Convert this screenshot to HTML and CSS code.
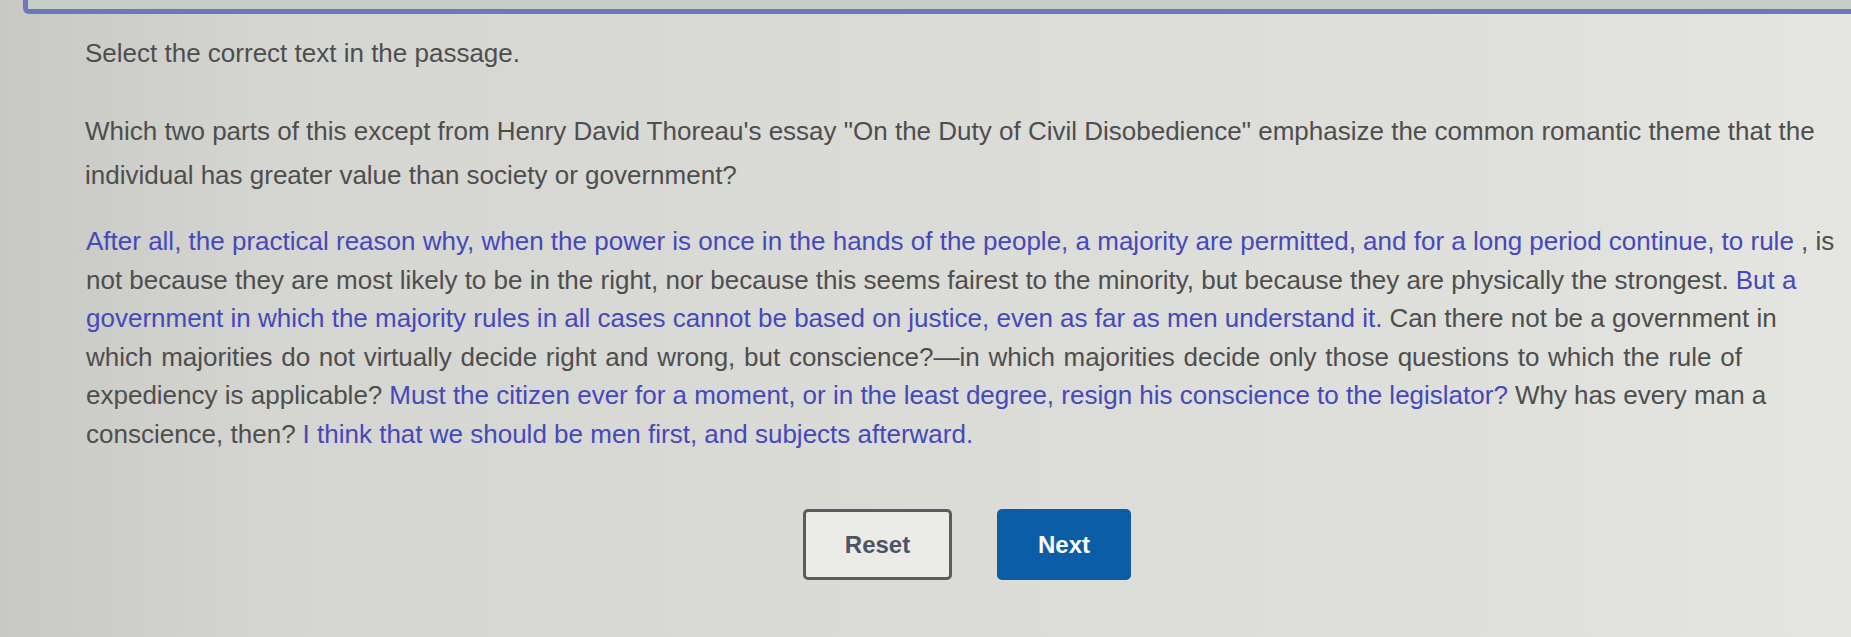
FILE: index.html
```html
<!DOCTYPE html>
<html lang="en">
<head>
<meta charset="utf-8">
<title>Select the correct text</title>
<link rel="stylesheet" href="styles.css">
</head>
<body>
<div class="topbar"></div>
<main class="content">
  <p class="instr">Select the correct text in the passage.</p>
  <p class="question">Which two parts of this except from Henry David Thoreau's essay "On the Duty of Civil Disobedience" emphasize the common romantic theme that the<br>individual has greater value than society or government?</p>
  <p class="passage">
    <span class="sel">After all, the practical reason why, when the power is once in the hands of the people, a majority are permitted, and for a long period continue, to rule</span> , is<br>
    not because they are most likely to be in the right, nor because this seems fairest to the minority, but because they are physically the strongest.<span class="gap"></span><span class="sel">But a</span><br>
    <span class="sel">government in which the majority rules in all cases cannot be based on justice, even as far as men understand it.</span><span class="gap"></span>Can there not be a government in<br>
    <span class="wide">which majorities do not virtually decide right and wrong, but conscience?—in which majorities decide only those questions to which the rule of</span><br>
    expediency is applicable?<span class="gap"></span><span class="sel">Must the citizen ever for a moment, or in the least degree, resign his conscience to the legislator?</span><span class="gap"></span>Why has every man a<br>
    conscience, then?<span class="gap"></span><span class="sel">I think that we should be men first, and subjects afterward.</span>
  </p>
  <div class="actions">
    <button class="btn btn-reset" type="button">Reset</button>
    <button class="btn btn-next" type="button">Next</button>
  </div>
</main>
</body>
</html>
```

FILE: styles.css
```css
html, body {
  margin: 0;
  padding: 0;
}

body {
  width: 1851px;
  height: 637px;
  overflow: hidden;
  font-family: "Liberation Sans", Arial, sans-serif;
  color: #4e4e4e;
  background: linear-gradient(90deg, #c8c8c4 0%, #d5d5d1 15%, #dbdbd7 50%, #dfdfdb 80%, #e5e5e1 100%);
}

.topbar {
  height: 9px;
  margin-left: 23px;
  border-left: 5px solid #6b78bd;
  border-bottom: 5px solid #6b78bd;
  border-bottom-left-radius: 6px;
  background: #c5cdc6;
}

.content {
  padding: 0 0 0 85px;
}

.instr {
  margin: 24px 0 0;
  font-size: 26px;
  line-height: 30px;
}

.question {
  margin: 41px 0 0;
  font-size: 26px;
  line-height: 44px;
  white-space: nowrap;
}

.passage {
  margin: 25px 0 0 1px;
  font-size: 26px;
  line-height: 38.5px;
  white-space: nowrap;
}

.sel {
  color: #4549bb;
}

.wide {
  word-spacing: 1.5px;
}

.gap {
  display: inline-block;
  width: 7px;
}

.actions {
  display: flex;
  gap: 45px;
  margin: 56px 0 0 718px;
}

.btn {
  height: 71px;
  font-family: "Liberation Sans", Arial, sans-serif;
  font-size: 24px;
  font-weight: bold;
  border-radius: 5px;
  cursor: pointer;
}

.btn-reset {
  width: 149px;
  background: #ebebe7;
  color: #4c5466;
  border: 3px solid #5a5c64;
}

.btn-next {
  width: 134px;
  background: #0b5ea6;
  color: #ffffff;
  border: none;
}
```
